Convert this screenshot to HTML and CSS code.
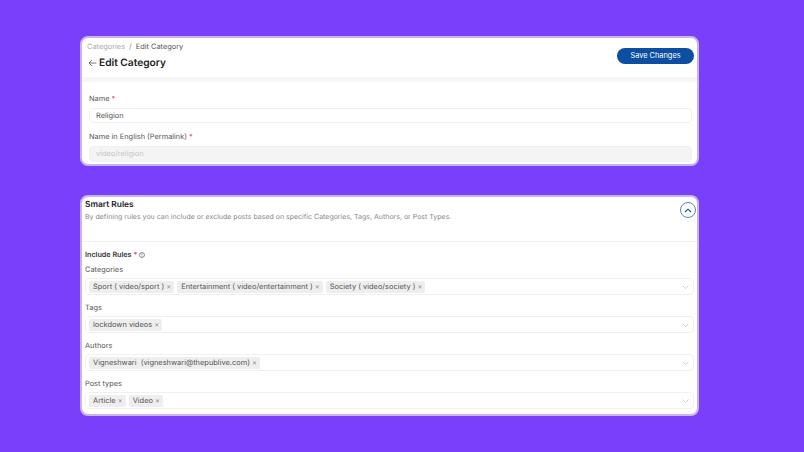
FILE: index.html
```html
<!DOCTYPE html>
<html lang="en">
  <head>
    <meta charset="UTF-8" />
    <title>Edit Category</title>
    <link rel="stylesheet" href="styles.css">
  </head>
  <body>
    <section class="card card-top">
      <header class="page-head">
        <div>
          <div class="crumbs"><span class="crumb-link">Categories</span><span class="crumb-sep">/</span><span>Edit Category</span></div>
          <h1 class="page-title">
            <svg class="back" width="9" height="8" viewBox="0 0 9 8"><path d="M8.5 4H1M4 1 1 4l3 3" fill="none" stroke="#555" stroke-width=".8"/></svg>
            Edit Category
          </h1>
        </div>
        <button class="save">Save Changes</button>
      </header>
      <div class="form">
        <label class="label">Name <em>*</em></label>
        <div class="input">Religion</div>
        <label class="label label-next">Name in English (Permalink) <em>*</em></label>
        <div class="input disabled">video/religion</div>
      </div>
    </section>

    <section class="card card-rules">
      <div class="rules-head">
        <div>
          <h2>Smart Rules</h2>
          <p>By defining rules you can include or exclude posts based on specific Categories, Tags, Authors, or Post Types.</p>
        </div>
        <button class="collapse">
          <svg width="8" height="5" viewBox="0 0 8 5"><path d="M1 4 4 1.2 7 4" fill="none" stroke="#0b4ea2" stroke-width="1.1"/></svg>
        </button>
      </div>
      <div class="rules-body">
        <div class="include">Include Rules <em>*</em>
          <svg width="6" height="6" viewBox="0 0 6 6"><circle cx="3" cy="3" r="2.5" fill="none" stroke="#444" stroke-width=".6"/><path d="M3 1.5V3.4M3 4v.5" stroke="#444" stroke-width=".6"/></svg>
        </div>

        <label class="label">Categories</label>
        <div class="select">
          <span class="tag">Sport ( video/sport ) <i>×</i></span>
          <span class="tag">Entertainment ( video/entertainment ) <i>×</i></span>
          <span class="tag">Society ( video/society ) <i>×</i></span>
          <svg class="chev" width="7" height="4" viewBox="0 0 7 4"><path d="M.5.5l3 3 3-3" fill="none" stroke="#bbb" stroke-width=".7"/></svg>
        </div>

        <label class="label">Tags</label>
        <div class="select">
          <span class="tag">lockdown videos <i>×</i></span>
          <svg class="chev" width="7" height="4" viewBox="0 0 7 4"><path d="M.5.5l3 3 3-3" fill="none" stroke="#bbb" stroke-width=".7"/></svg>
        </div>

        <label class="label">Authors</label>
        <div class="select">
          <span class="tag">Vigneshwari &nbsp;(vigneshwari@thepublive.com) <i>×</i></span>
          <svg class="chev" width="7" height="4" viewBox="0 0 7 4"><path d="M.5.5l3 3 3-3" fill="none" stroke="#bbb" stroke-width=".7"/></svg>
        </div>

        <label class="label">Post types</label>
        <div class="select">
          <span class="tag">Article <i>×</i></span>
          <span class="tag">Video <i>×</i></span>
          <svg class="chev" width="7" height="4" viewBox="0 0 7 4"><path d="M.5.5l3 3 3-3" fill="none" stroke="#bbb" stroke-width=".7"/></svg>
        </div>
      </div>
    </section>
  </body>
</html>
```

FILE: styles.css
```css
* {
  margin: 0;
  box-sizing: border-box;
}
body {
  background-color: #7a3ffb;
  font-family: "Inter", "Liberation Sans", sans-serif;
  text-rendering: geometricPrecision;
  color: #444;
  width: 804px;
  height: 452px;
  overflow: hidden;
  padding: 36px 105px 0 80px;
}
.card {
  background-color: #fff;
  border: 2px solid #c9b5ea;
  border-radius: 8px;
  overflow: hidden;
}
.card-top {
  height: 130px;
}
.card-rules {
  height: 221px;
  margin-top: 29px;
}
.page-head {
  display: flex;
  justify-content: space-between;
  align-items: center;
  height: 44px;
  padding: 0 3px 4px 5px;
  border-bottom: 5px solid #f6f6f6;
}
.crumbs {
  font-size: 7.4px;
  line-height: 12px;
  color: #555;
}
.crumb-link {
  color: #aaa;
}
.crumb-sep {
  color: #888;
  margin: 0 4px;
}
.page-title {
  display: flex;
  align-items: center;
  gap: 2px;
  font-size: 10.2px;
  font-weight: 600;
  line-height: 16px;
  margin-top: 2px;
  margin-left: 1px;
  color: #222;
}
.save {
  width: 77px;
  height: 16px;
  border: 0;
  border-radius: 8px;
  background-color: #0b4ea2;
  color: #fff;
  font: 7.4px "Inter", "Liberation Sans", sans-serif;
}
.form {
  padding: 12px 5px 0 7px;
}
.label {
  display: block;
  font-size: 7.4px;
  line-height: 10px;
  color: #555;
}
.label em,
.include em {
  color: #e5484d;
  font-style: normal;
}
.label-next {
  margin-top: 9px;
}
.input {
  height: 15px;
  margin-top: 4px;
  padding-left: 6px;
  border: 1px solid #f0f0f0;
  border-radius: 4px;
  font-size: 7.4px;
  line-height: 13px;
  color: #555;
}
.disabled {
  height: 16px;
  background-color: #f4f4f4;
  color: #c4c4c4;
}
.rules-head {
  display: flex;
  justify-content: space-between;
  height: 45px;
  padding: 2px 1px 0 3px;
  border-bottom: 1px solid #f0f0f0;
}
.rules-head h2 {
  font-size: 8.4px;
  font-weight: 600;
  line-height: 12px;
  color: #222;
}
.rules-head p {
  font-size: 7px;
  line-height: 11px;
  color: #888;
}
.collapse {
  display: flex;
  align-items: center;
  justify-content: center;
  width: 16px;
  height: 16px;
  margin-top: 3px;
  padding: 0;
  border: 1px solid #5a83b8;
  border-radius: 50%;
  background-color: #fff;
}
.rules-body {
  padding: 8px 3px 0 3px;
}
.include {
  display: flex;
  align-items: center;
  gap: 2px;
  font-size: 7.2px;
  font-weight: 600;
  line-height: 10px;
  color: #333;
  margin-bottom: 5px;
}
.select {
  display: flex;
  align-items: center;
  gap: 3px;
  height: 17px;
  margin: 3px 0 8px;
  padding: 0 4px 0 3px;
  border: 1px solid #f0f0f0;
  border-radius: 4px;
}
.tag {
  height: 12px;
  padding: 0 3px 0 4px;
  background-color: #eeeeee;
  border-radius: 2px;
  font-size: 7.45px;
  line-height: 12px;
  color: #555;
  white-space: nowrap;
}
.tag i {
  font-style: normal;
  color: #888;
}
.chev {
  margin-left: auto;
}
```
